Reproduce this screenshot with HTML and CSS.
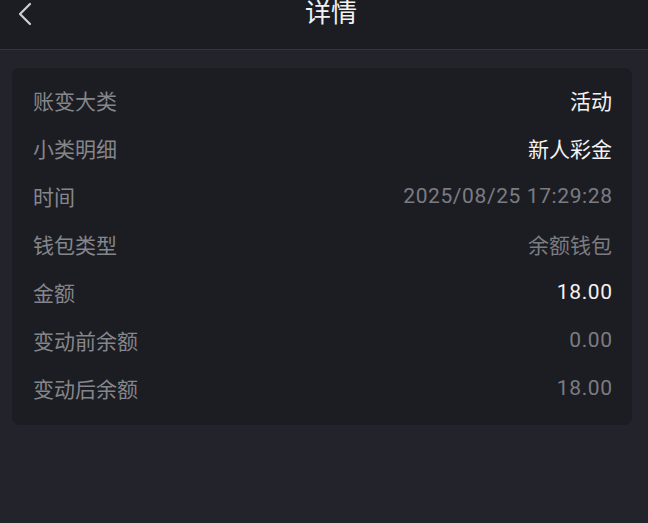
FILE: index.html
```html
<!DOCTYPE html>
<html lang="zh-CN">
<head>
<meta charset="utf-8">
<link rel="stylesheet" href="styles.css">
</head>
<body>
<header class="topbar">
  <span class="back">
    <svg width="14" height="24" viewBox="0 0 14 24"><path d="M12 2 L2 12 L12 22" fill="none" stroke="#cfd0d3" stroke-width="2.2" stroke-linecap="round" stroke-linejoin="round"/></svg>
  </span>
  <h1 class="title">详情</h1>
</header>
<main class="page">
  <section class="card">
    <div class="row"><span class="label">账变大类</span><span class="value strong">活动</span></div>
    <div class="row"><span class="label">小类明细</span><span class="value strong">新人彩金</span></div>
    <div class="row"><span class="label">时间</span><span class="value num">2025/08/25 17:29:28</span></div>
    <div class="row"><span class="label">钱包类型</span><span class="value">余额钱包</span></div>
    <div class="row"><span class="label">金额</span><span class="value strong num">18.00</span></div>
    <div class="row"><span class="label">变动前余额</span><span class="value num">0.00</span></div>
    <div class="row"><span class="label">变动后余额</span><span class="value num">18.00</span></div>
  </section>
</main>
</body>
</html>
```
FILE: styles.css
```css
html, body {
  margin: 0;
  padding: 0;
  background: #22232b;
  font-family: Roboto, "Noto Sans CJK SC", sans-serif;
  height: 100%;
}
.topbar {
  position: relative;
  height: 49px;
  background: #1c1d22;
  border-bottom: 1px solid #34363e;
  display: flex;
  justify-content: center;
}
.back {
  position: absolute;
  left: 18px;
  top: 2px;
  line-height: 0;
}
.title {
  margin: -2px 0 0 14px;
  font-size: 26px;
  line-height: 30px;
  font-weight: 400;
  color: #f2f2f2;
}
.page {
  padding: 18px 16px 0 12px;
}
.card {
  background: #1c1d22;
  border-radius: 8px;
  padding: 8px 20px 13px 21px;
}
.row {
  height: 48px;
  display: flex;
  align-items: center;
  justify-content: space-between;
  font-size: 21px;
}
.label {
  color: #85868c;
}
.value {
  color: #7b7c82;
}
.value.num {
  letter-spacing: 0.6px;
  margin-right: -0.6px;
}
.value.strong {
  color: #f3f3f3;
}
```
